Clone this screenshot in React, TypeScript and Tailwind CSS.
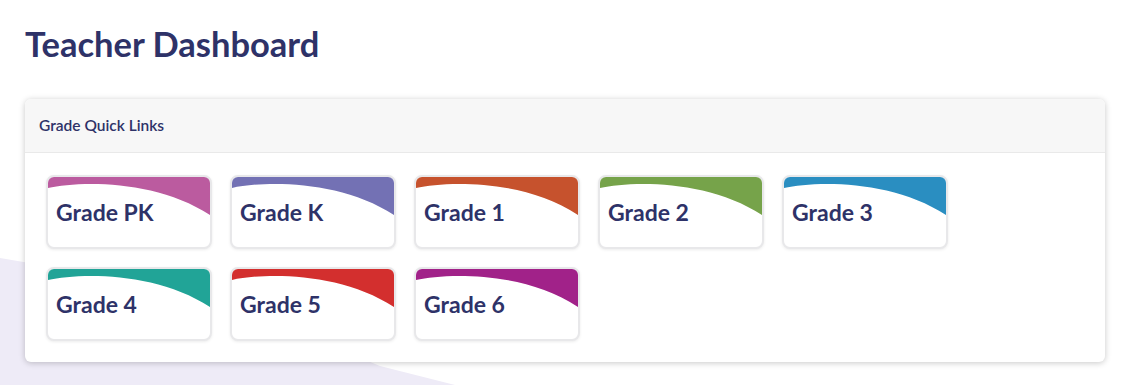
import React from 'react'

const grades = [
  { label: 'Grade PK', color: '#bb5b9f' },
  { label: 'Grade K', color: '#7371b4' },
  { label: 'Grade 1', color: '#c6522d' },
  { label: 'Grade 2', color: '#76a34a' },
  { label: 'Grade 3', color: '#2a8ec1' },
  { label: 'Grade 4', color: '#21a497' },
  { label: 'Grade 5', color: '#d32f2e' },
  { label: 'Grade 6', color: '#a12289' },
]

function GradeCard({ label, color }: { label: string; color: string }) {
  return (
    <a
      href="#"
      className="relative block w-[166px] h-[74px] rounded-[8px] border-2 border-[#e8e8ea] bg-white overflow-hidden shadow-[0_1px_3px_rgba(0,0,0,0.08)]"
    >
      <svg
        className="absolute inset-0"
        width="162"
        height="70"
        viewBox="0 0 162 70"
        preserveAspectRatio="none"
      >
        <path d="M0 0 H162 V38 C108 2 30 4 0 11 Z" fill={color} />
      </svg>
      <span className="relative block pl-[8px] pt-[21px] text-[23px] leading-[28px] font-bold text-[#2e3268]">
        {label}
      </span>
    </a>
  )
}

export default function App() {
  return (
    <div
      className="relative w-full min-h-[385px] bg-white overflow-hidden"
      style={{ fontFamily: 'Lato, "Noto Sans", sans-serif' }}
    >
      <svg className="absolute left-0 top-0" width="1126" height="385">
        <polygon points="0,258 200,292 380,366 455,385 0,385" fill="#eeebf7" />
      </svg>

      <div className="relative px-[25px] pt-[23px]">
        <h1 className="text-[34.5px] leading-[42px] font-bold text-[#2e3268]">
          Teacher Dashboard
        </h1>

        <section className="mt-[34px] w-[1080px] rounded-[6px] bg-white shadow-[0_1px_6px_rgba(0,0,0,0.22)] overflow-hidden">
          <div className="h-[54px] flex items-center px-[14px] bg-[#f7f7f7] border-b border-[#e9e9e9]">
            <h2 className="text-[15.5px] font-semibold text-[#2e3268]">Grade Quick Links</h2>
          </div>
          <div className="px-[21px] pt-[22px] pb-[21px] flex flex-wrap gap-[18px] w-[960px]">
            {grades.map((g) => (
              <GradeCard key={g.label} label={g.label} color={g.color} />
            ))}
          </div>
        </section>
      </div>
    </div>
  )
}
